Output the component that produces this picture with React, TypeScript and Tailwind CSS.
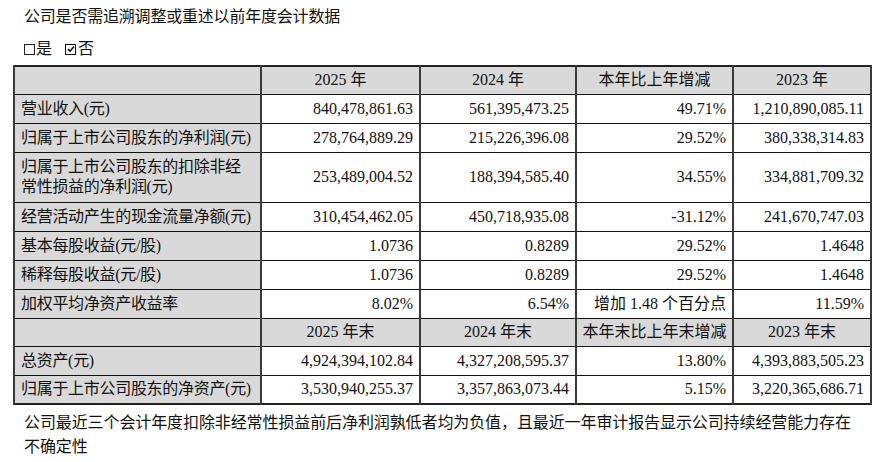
const FONT = "font-['Liberation_Serif','Noto_Sans_CJK_SC',serif]";

type Row = { label: string[]; values: string[]; tall?: boolean };

const topRows: Row[] = [
  { label: ["营业收入(元)"], values: ["840,478,861.63", "561,395,473.25", "49.71%", "1,210,890,085.11"] },
  { label: ["归属于上市公司股东的净利润(元)"], values: ["278,764,889.29", "215,226,396.08", "29.52%", "380,338,314.83"] },
  {
    label: ["归属于上市公司股东的扣除非经", "常性损益的净利润(元)"],
    values: ["253,489,004.52", "188,394,585.40", "34.55%", "334,881,709.32"],
    tall: true,
  },
  { label: ["经营活动产生的现金流量净额(元)"], values: ["310,454,462.05", "450,718,935.08", "-31.12%", "241,670,747.03"] },
  { label: ["基本每股收益(元/股)"], values: ["1.0736", "0.8289", "29.52%", "1.4648"] },
  { label: ["稀释每股收益(元/股)"], values: ["1.0736", "0.8289", "29.52%", "1.4648"] },
  { label: ["加权平均净资产收益率"], values: ["8.02%", "6.54%", "增加 1.48 个百分点", "11.59%"] },
];

const bottomRows: Row[] = [
  { label: ["总资产(元)"], values: ["4,924,394,102.84", "4,327,208,595.37", "13.80%", "4,393,883,505.23"] },
  { label: ["归属于上市公司股东的净资产(元)"], values: ["3,530,940,255.37", "3,357,863,073.44", "5.15%", "3,220,365,686.71"] },
];

const cell = "border-x-2 border-x-[#3a3a3a] border-y border-y-[#111] p-0";

function HeaderRow({ cols }: { cols: string[] }) {
  return (
    <tr className="h-[28px] bg-[#d9d9d9]">
      <td className={cell} />
      {cols.map((c) => (
        <td key={c} className={`${cell} text-center leading-[20px]`}>
          {c}
        </td>
      ))}
    </tr>
  );
}

function DataRow({ row }: { row: Row }) {
  return (
    <tr className={row.tall ? "h-[50px]" : "h-[29px]"}>
      <td className={`${cell} bg-[#d9d9d9] pl-[6px] leading-[20px] whitespace-nowrap tracking-[-0.3px]`}>
        {row.label.map((l) => (
          <div key={l}>{l}</div>
        ))}
      </td>
      {row.values.map((v, i) => (
        <td key={i} className={`${cell} bg-white pr-[6px] text-right leading-[20px] whitespace-nowrap`}>
          {v}
        </td>
      ))}
    </tr>
  );
}

export default function App() {
  return (
    <div className={`w-[885px] h-[462px] overflow-hidden bg-white text-[#111] text-[16px] ${FONT} pl-[13px] pt-[6px]`}>
      <div className="pl-[11px] leading-[22px] tracking-[-0.2px]">公司是否需追溯调整或重述以前年度会计数据</div>
      <div className="pl-[11px] mt-[10px] leading-[22px] flex items-center">
        <span className="inline-block w-[11px] h-[11px] border border-[#222] mr-[1px]" />
        <span>是</span>
        <span className="inline-flex items-center justify-center w-[11px] h-[11px] border-[1.5px] border-[#111] ml-[13px] mr-[2px]">
          <svg width="8" height="8" viewBox="0 0 8 8">
            <path d="M1 4.2 L3.1 6.2 L7 1.6" fill="none" stroke="#111" strokeWidth="1.6" />
          </svg>
        </span>
        <span>否</span>
      </div>
      <table className="mt-[5px] w-[857px] table-fixed border-collapse border-2 border-[#222]">
        <colgroup>
          <col className="w-[247px]" />
          <col className="w-[159px]" />
          <col className="w-[156px]" />
          <col className="w-[157px]" />
          <col className="w-[138px]" />
        </colgroup>
        <tbody>
          <HeaderRow cols={["2025 年", "2024 年", "本年比上年增减", "2023 年"]} />
          {topRows.map((r) => (
            <DataRow key={r.label.join("")} row={r} />
          ))}
          <HeaderRow cols={["2025 年末", "2024 年末", "本年末比上年末增减", "2023 年末"]} />
          {bottomRows.map((r) => (
            <DataRow key={r.label.join("")} row={r} />
          ))}
        </tbody>
      </table>
      <div className="pl-[11px] mt-[6px] leading-[24px] whitespace-nowrap tracking-[-0.1px]">
        公司最近三个会计年度扣除非经常性损益前后净利润孰低者均为负值，且最近一年审计报告显示公司持续经营能力存在
        <br />
        不确定性
      </div>
    </div>
  );
}
